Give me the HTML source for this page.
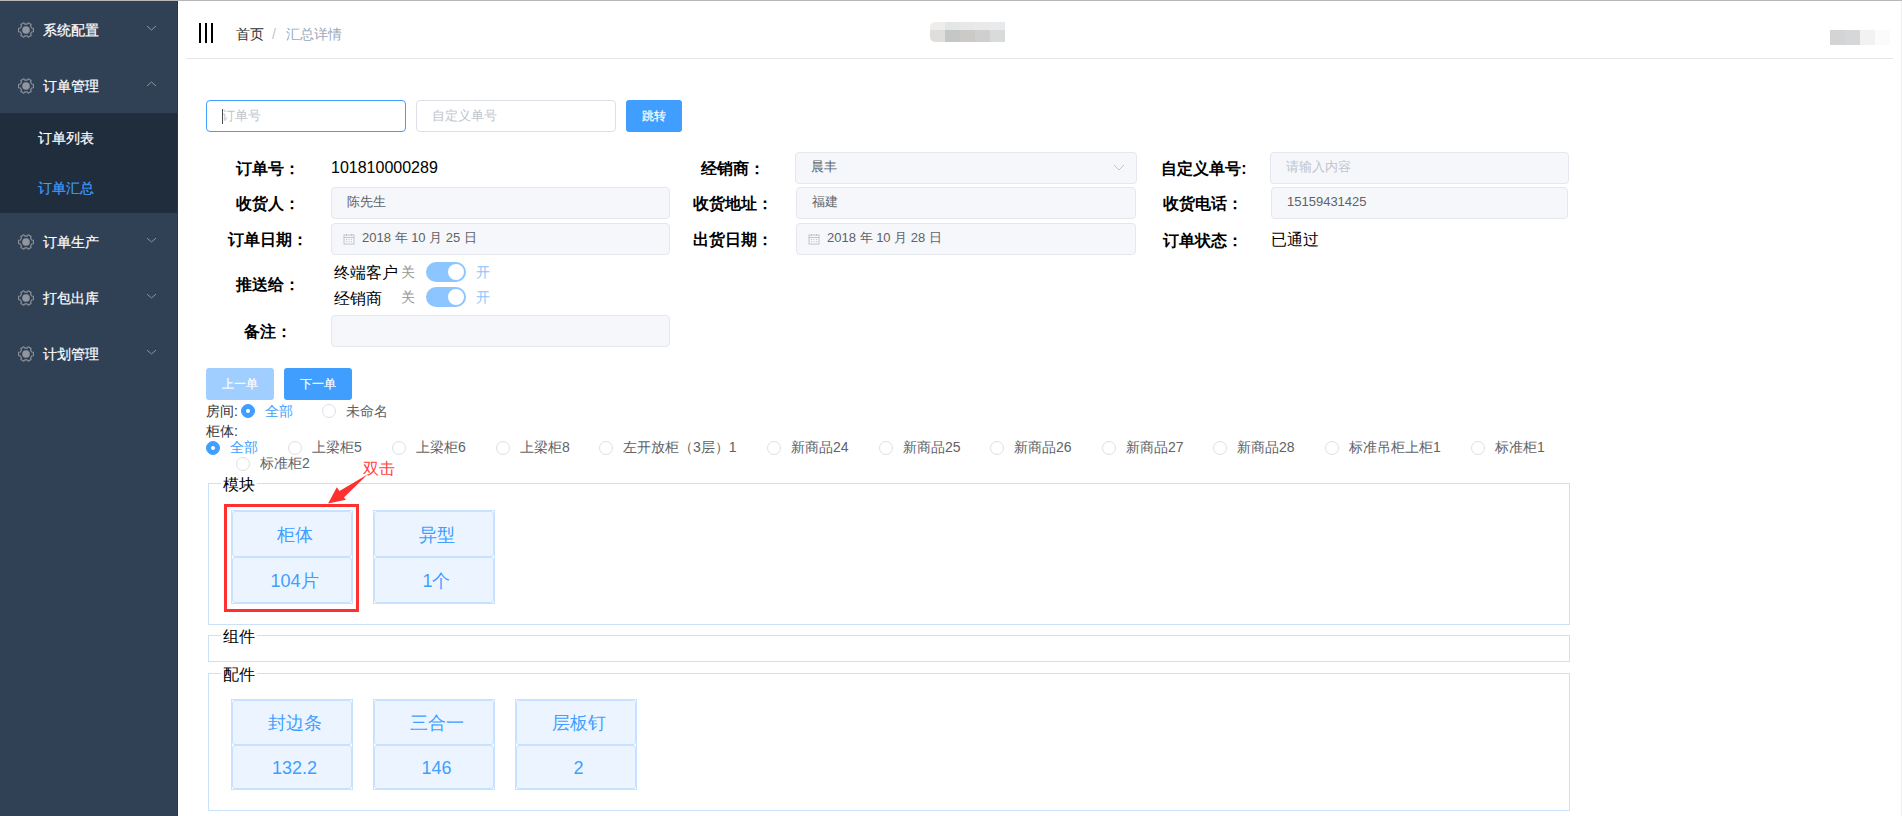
<!DOCTYPE html><html><head><meta charset="utf-8"><style>
*{box-sizing:border-box;margin:0;padding:0}
html,body{width:1902px;height:816px;overflow:hidden;background:#fff;font-family:"Liberation Sans",sans-serif;color:#303133}
div,span{position:absolute}
#topline{left:0;top:0;width:1902px;height:1px;background:#b9b6b9;z-index:5}
#side{left:0;top:0;width:178px;height:816px;background:#304156}
#side .edge{right:0;top:0;width:1px;height:816px;background:rgba(0,0,0,0.15);z-index:2}
.mi{left:0;width:177px;height:56px;color:#fff;font-size:14px;-webkit-text-stroke:0.2px #fff}
.mi .t{left:43px;top:19px;line-height:20px;white-space:nowrap}
svg{position:absolute}
#sub{left:0;top:113px;width:177px;height:100px;background:#1f2d3d}
.si{left:38px;font-size:14px;color:#fff;-webkit-text-stroke:0.2px currentColor;line-height:20px;white-space:nowrap}
.bar{top:23px;width:2px;height:20px;background:#000}
#hline{left:186px;top:58px;width:1707px;height:1px;background:#e6e6e6}
#rline{left:1901px;top:0;width:1px;height:816px;background:#efefef}
.crumb{font-size:14px;line-height:20px;top:24px;white-space:nowrap}
.inp{height:32px;border:1px solid #dcdfe6;border-radius:4px;background:#fff;font-size:13px;color:#c0c4cc;line-height:30px;padding-left:15px;white-space:nowrap}
.btn{height:32px;border-radius:3px;background:#409eff;color:#fff;font-size:12px;-webkit-text-stroke:0.2px #fff;line-height:32px;text-align:center;white-space:nowrap}
.lbl{text-align:center;font-size:16px;font-weight:bold;color:#000;line-height:22px;white-space:nowrap}
.val{font-size:16px;color:#000;line-height:22px;white-space:nowrap}
.dis{border:1px solid #e4e7ed;border-radius:4px;background:#f5f7fa;font-size:13px;color:#606266;line-height:29px;padding-left:15px;white-space:nowrap}
.ph{color:#c0c4cc}
.sw{width:40px;height:20px;border-radius:10px;background:#8cc5ff}
.sw:after{content:"";position:absolute;right:2px;top:2px;width:16px;height:16px;border-radius:50%;background:#fff}
.sl{font-size:14px;line-height:20px;white-space:nowrap}
.radio{width:14px;height:14px;border:1px solid #dcdfe6;border-radius:50%;background:#fff}
.radio.on{border-color:#409eff;background:#409eff}
.radio.on:after{content:"";position:absolute;left:4px;top:4px;width:4px;height:4px;border-radius:50%;background:#fff}
.rt{font-size:14px;color:#606266;line-height:20px;white-space:nowrap}
.rt.on{color:#409eff}
.fs{left:208px;width:1362px;border:1px solid #c9e1f9}
.lg{left:12px;top:-9px;background:#fff;padding:0 2px;font-size:16px;line-height:20px;color:#000;white-space:nowrap}
.card{width:122px;border:1px solid #c6e2ff;background:#fff}
.cell{position:relative;border:1px solid #c6e2ff;border-radius:3px;background:#ecf5ff;color:#409eff;font-size:18px;text-align:center;white-space:nowrap;padding-left:5px;padding-top:2px}
</style></head><body>
<div id="topline"></div>
<div id="side"><div class="edge"></div><div id="sub"></div>
<div class="mi" style="top:1px"><svg width="18" height="18" viewBox="-1 -1 18 18" style="left:17px;top:20px"><path d="M15.41 9.71 L15.41 6.29 L13.67 6.05 L12.53 4.06 L13.18 2.44 L10.22 0.73 L9.14 2.11 L6.86 2.11 L5.78 0.73 L2.82 2.44 L3.47 4.06 L2.33 6.05 L0.59 6.29 L0.59 9.71 L2.33 9.95 L3.47 11.94 L2.82 13.56 L5.78 15.27 L6.86 13.89 L9.14 13.89 L10.22 15.27 L13.18 13.56 L12.53 11.94 L13.67 9.95Z" fill="none" stroke="#8c939c" stroke-width="1.1" stroke-linejoin="round"/><circle cx="8" cy="8" r="3.8" fill="#91959d"/></svg><span class="t">系统配置</span><svg width="11" height="6" viewBox="0 0 11 6" style="left:146px;top:24px"><path d="M1 1L5.5 5L10 1" fill="none" stroke="#909399" stroke-width="1"/></svg></div>
<div class="mi" style="top:57px"><svg width="18" height="18" viewBox="-1 -1 18 18" style="left:17px;top:20px"><path d="M15.41 9.71 L15.41 6.29 L13.67 6.05 L12.53 4.06 L13.18 2.44 L10.22 0.73 L9.14 2.11 L6.86 2.11 L5.78 0.73 L2.82 2.44 L3.47 4.06 L2.33 6.05 L0.59 6.29 L0.59 9.71 L2.33 9.95 L3.47 11.94 L2.82 13.56 L5.78 15.27 L6.86 13.89 L9.14 13.89 L10.22 15.27 L13.18 13.56 L12.53 11.94 L13.67 9.95Z" fill="none" stroke="#8c939c" stroke-width="1.1" stroke-linejoin="round"/><circle cx="8" cy="8" r="3.8" fill="#91959d"/></svg><span class="t">订单管理</span><svg width="11" height="6" viewBox="0 0 11 6" style="left:146px;top:24px"><path d="M1 5L5.5 1L10 5" fill="none" stroke="#909399" stroke-width="1"/></svg></div>
<div class="mi" style="top:213px"><svg width="18" height="18" viewBox="-1 -1 18 18" style="left:17px;top:20px"><path d="M15.41 9.71 L15.41 6.29 L13.67 6.05 L12.53 4.06 L13.18 2.44 L10.22 0.73 L9.14 2.11 L6.86 2.11 L5.78 0.73 L2.82 2.44 L3.47 4.06 L2.33 6.05 L0.59 6.29 L0.59 9.71 L2.33 9.95 L3.47 11.94 L2.82 13.56 L5.78 15.27 L6.86 13.89 L9.14 13.89 L10.22 15.27 L13.18 13.56 L12.53 11.94 L13.67 9.95Z" fill="none" stroke="#8c939c" stroke-width="1.1" stroke-linejoin="round"/><circle cx="8" cy="8" r="3.8" fill="#91959d"/></svg><span class="t">订单生产</span><svg width="11" height="6" viewBox="0 0 11 6" style="left:146px;top:24px"><path d="M1 1L5.5 5L10 1" fill="none" stroke="#909399" stroke-width="1"/></svg></div>
<div class="mi" style="top:269px"><svg width="18" height="18" viewBox="-1 -1 18 18" style="left:17px;top:20px"><path d="M15.41 9.71 L15.41 6.29 L13.67 6.05 L12.53 4.06 L13.18 2.44 L10.22 0.73 L9.14 2.11 L6.86 2.11 L5.78 0.73 L2.82 2.44 L3.47 4.06 L2.33 6.05 L0.59 6.29 L0.59 9.71 L2.33 9.95 L3.47 11.94 L2.82 13.56 L5.78 15.27 L6.86 13.89 L9.14 13.89 L10.22 15.27 L13.18 13.56 L12.53 11.94 L13.67 9.95Z" fill="none" stroke="#8c939c" stroke-width="1.1" stroke-linejoin="round"/><circle cx="8" cy="8" r="3.8" fill="#91959d"/></svg><span class="t">打包出库</span><svg width="11" height="6" viewBox="0 0 11 6" style="left:146px;top:24px"><path d="M1 1L5.5 5L10 1" fill="none" stroke="#909399" stroke-width="1"/></svg></div>
<div class="mi" style="top:325px"><svg width="18" height="18" viewBox="-1 -1 18 18" style="left:17px;top:20px"><path d="M15.41 9.71 L15.41 6.29 L13.67 6.05 L12.53 4.06 L13.18 2.44 L10.22 0.73 L9.14 2.11 L6.86 2.11 L5.78 0.73 L2.82 2.44 L3.47 4.06 L2.33 6.05 L0.59 6.29 L0.59 9.71 L2.33 9.95 L3.47 11.94 L2.82 13.56 L5.78 15.27 L6.86 13.89 L9.14 13.89 L10.22 15.27 L13.18 13.56 L12.53 11.94 L13.67 9.95Z" fill="none" stroke="#8c939c" stroke-width="1.1" stroke-linejoin="round"/><circle cx="8" cy="8" r="3.8" fill="#91959d"/></svg><span class="t">计划管理</span><svg width="11" height="6" viewBox="0 0 11 6" style="left:146px;top:24px"><path d="M1 1L5.5 5L10 1" fill="none" stroke="#909399" stroke-width="1"/></svg></div>
<span class="si" style="top:128px">订单列表</span>
<span class="si" style="top:178px;color:#409eff">订单汇总</span>
</div>
<div class="bar" style="left:199px"></div>
<div class="bar" style="left:205px"></div>
<div class="bar" style="left:211px"></div>
<span class="crumb" style="left:236px;color:#303133">首页</span>
<span class="crumb" style="left:272px;color:#c0c4cc">/</span>
<span class="crumb" style="left:286px;color:#97a8be">汇总详情</span>
<div id="hline"></div><div id="rline"></div>
<div style="left:930px;top:22px;width:15px;height:8px;background:#efedeb;border-radius:5px 0 0 0;"></div>
<div style="left:930px;top:30px;width:15px;height:12px;background:#dfdedd;border-radius:0 0 0 5px;"></div>
<div style="left:945px;top:22px;width:15px;height:8px;background:#e3e6e7;"></div>
<div style="left:945px;top:30px;width:15px;height:12px;background:#c5c6c6;"></div>
<div style="left:960px;top:22px;width:15px;height:8px;background:#e8e8e8;"></div>
<div style="left:960px;top:30px;width:15px;height:12px;background:#cbcac6;"></div>
<div style="left:975px;top:22px;width:15px;height:8px;background:#eae9e7;"></div>
<div style="left:975px;top:30px;width:15px;height:12px;background:#cfcfcf;"></div>
<div style="left:990px;top:22px;width:15px;height:8px;background:#e9eaec;"></div>
<div style="left:990px;top:30px;width:15px;height:12px;background:#d9dbda;"></div>
<div style="left:1830px;top:30px;width:15px;height:15px;background:#d4d4d4"></div>
<div style="left:1845px;top:30px;width:15px;height:15px;background:#d6d7d9"></div>
<div style="left:1860px;top:30px;width:15px;height:15px;background:#f2f2f2"></div>
<div style="left:1875px;top:30px;width:15px;height:15px;background:#fbfbfb"></div>
<div class="inp" style="left:206px;top:100px;width:200px;border-color:#409eff"><span style="left:15px;top:8px;width:1px;height:15px;background:#4a4a4a"></span>订单号</div>
<div class="inp" style="left:416px;top:100px;width:200px">自定义单号</div>
<div class="btn" style="left:626px;top:100px;width:56px">跳转</div>
<span class="lbl" style="left:268px;top:158px;width:160px;margin-left:-80px">订单号：</span>
<span class="lbl" style="left:268px;top:193px;width:160px;margin-left:-80px">收货人：</span>
<span class="lbl" style="left:268px;top:229px;width:160px;margin-left:-80px">订单日期：</span>
<span class="lbl" style="left:268px;top:274px;width:160px;margin-left:-80px">推送给：</span>
<span class="lbl" style="left:268px;top:321px;width:160px;margin-left:-80px">备注：</span>
<span class="lbl" style="left:733px;top:158px;width:160px;margin-left:-80px">经销商：</span>
<span class="lbl" style="left:733px;top:193px;width:160px;margin-left:-80px">收货地址：</span>
<span class="lbl" style="left:733px;top:229px;width:160px;margin-left:-80px">出货日期：</span>
<span class="lbl" style="left:1204px;top:158px;width:160px;margin-left:-80px">自定义单号:</span>
<span class="lbl" style="left:1203px;top:193px;width:160px;margin-left:-80px">收货电话：</span>
<span class="lbl" style="left:1203px;top:230px;width:160px;margin-left:-80px">订单状态：</span>
<span class="val" style="left:331px;top:157px">101810000289</span>
<span class="val" style="left:1271px;top:229px">已通过</span>
<div class="dis" style="left:331px;top:187px;width:339px;height:32px;line-height:28px">陈先生</div>
<div class="dis" style="left:331px;top:223px;width:339px;height:32px;line-height:28px"><span style="left:30px;top:0">2018 年 10 月 25 日</span><svg width="12" height="12" viewBox="0 0 12 12" style="left:11px;top:9px"><rect x="1" y="2" width="10" height="9" fill="none" stroke="#c0c4cc" stroke-width="1"/><path d="M1 4.5h10M3 6.5h1M5.5 6.5h1M8 6.5h1M3 8.5h1M5.5 8.5h1M8 8.5h1M3.5 1v2M8.5 1v2" stroke="#c0c4cc" stroke-width="1"/></svg></div>
<div class="dis" style="left:331px;top:315px;width:339px;height:32px;line-height:28px"></div>
<div class="dis" style="left:795px;top:152px;width:342px;height:32px;line-height:28px">晨丰<svg width="12" height="7" viewBox="0 0 12 7" style="left:317px;top:11px"><path d="M1 1l5 5 5-5" fill="none" stroke="#c0c4cc" stroke-width="1"/></svg></div>
<div class="dis" style="left:796px;top:187px;width:340px;height:32px;line-height:28px">福建</div>
<div class="dis" style="left:796px;top:223px;width:340px;height:32px;line-height:28px"><span style="left:30px;top:0">2018 年 10 月 28 日</span><svg width="12" height="12" viewBox="0 0 12 12" style="left:11px;top:9px"><rect x="1" y="2" width="10" height="9" fill="none" stroke="#c0c4cc" stroke-width="1"/><path d="M1 4.5h10M3 6.5h1M5.5 6.5h1M8 6.5h1M3 8.5h1M5.5 8.5h1M8 8.5h1M3.5 1v2M8.5 1v2" stroke="#c0c4cc" stroke-width="1"/></svg></div>
<div class="dis" style="left:1270px;top:152px;width:299px;height:32px;line-height:28px"><span class="ph" style="left:15px;top:0">请输入内容</span></div>
<div class="dis" style="left:1271px;top:187px;width:297px;height:32px;line-height:28px">15159431425</div>
<span class="sl" style="left:334px;top:263px;color:#000;font-size:16px">终端客户</span>
<span class="sl" style="left:401px;top:262px;color:#959595">关</span>
<div class="sw" style="left:426px;top:262px"></div>
<span class="sl" style="left:476px;top:262px;color:#8cc5ff">开</span>
<span class="sl" style="left:334px;top:289px;color:#000;font-size:16px">经销商</span>
<span class="sl" style="left:401px;top:287px;color:#959595">关</span>
<div class="sw" style="left:426px;top:287px"></div>
<span class="sl" style="left:476px;top:287px;color:#8cc5ff">开</span>
<div class="btn" style="left:206px;top:368px;width:68px;background:#a0cfff">上一单</div>
<div class="btn" style="left:284px;top:368px;width:68px">下一单</div>
<span class="rt" style="left:206px;top:401px;color:#303133">房间:</span>
<div class="radio on" style="left:241px;top:404px"></div>
<span class="rt on" style="left:265px;top:401px">全部</span>
<div class="radio" style="left:322px;top:404px"></div>
<span class="rt" style="left:346px;top:401px">未命名</span>
<span class="rt" style="left:206px;top:421px;color:#303133">柜体:</span>
<div class="radio on" style="left:206px;top:441px"></div>
<span class="rt on" style="left:230px;top:437px">全部</span>
<div class="radio" style="left:288px;top:441px"></div>
<span class="rt" style="left:312px;top:437px">上梁柜5</span>
<div class="radio" style="left:392px;top:441px"></div>
<span class="rt" style="left:416px;top:437px">上梁柜6</span>
<div class="radio" style="left:496px;top:441px"></div>
<span class="rt" style="left:520px;top:437px">上梁柜8</span>
<div class="radio" style="left:599px;top:441px"></div>
<span class="rt" style="left:623px;top:437px">左开放柜（3层）1</span>
<div class="radio" style="left:767px;top:441px"></div>
<span class="rt" style="left:791px;top:437px">新商品24</span>
<div class="radio" style="left:879px;top:441px"></div>
<span class="rt" style="left:903px;top:437px">新商品25</span>
<div class="radio" style="left:990px;top:441px"></div>
<span class="rt" style="left:1014px;top:437px">新商品26</span>
<div class="radio" style="left:1102px;top:441px"></div>
<span class="rt" style="left:1126px;top:437px">新商品27</span>
<div class="radio" style="left:1213px;top:441px"></div>
<span class="rt" style="left:1237px;top:437px">新商品28</span>
<div class="radio" style="left:1325px;top:441px"></div>
<span class="rt" style="left:1349px;top:437px">标准吊柜上柜1</span>
<div class="radio" style="left:1471px;top:441px"></div>
<span class="rt" style="left:1495px;top:437px">标准柜1</span>
<div class="radio" style="left:236px;top:457px"></div>
<span class="rt" style="left:260px;top:453px">标准柜2</span>
<span style="left:363px;top:459px;font-size:16px;line-height:20px;color:#ff4040;white-space:nowrap">双击</span>
<div class="fs" style="top:483px;height:142px"><span class="lg">模块</span></div>
<div class="fs" style="top:635px;height:27px"><span class="lg">组件</span></div>
<div class="fs" style="top:673px;height:138px"><span class="lg">配件</span></div>
<div class="card" style="left:231px;top:510px;height:94px"><div class="cell" style="height:46px;line-height:42px">柜体</div><div class="cell" style="height:46px;line-height:42px">104片</div></div>
<div class="card" style="left:373px;top:510px;height:94px"><div class="cell" style="height:46px;line-height:42px">异型</div><div class="cell" style="height:46px;line-height:42px">1个</div></div>
<div class="card" style="left:231px;top:699px;height:91px"><div class="cell" style="height:45px;line-height:41px">封边条</div><div class="cell" style="height:44px;line-height:40px">132.2</div></div>
<div class="card" style="left:373px;top:699px;height:91px"><div class="cell" style="height:45px;line-height:41px">三合一</div><div class="cell" style="height:44px;line-height:40px">146</div></div>
<div class="card" style="left:515px;top:699px;height:91px"><div class="cell" style="height:45px;line-height:41px">层板钉</div><div class="cell" style="height:44px;line-height:40px">2</div></div>
<div style="left:224px;top:504px;width:135px;height:108px;border:3px solid #ff3030"></div>
<svg width="60" height="40" viewBox="0 0 60 40" style="position:absolute;left:320px;top:470px"><path d="M47.5 4.5 L19.5 21 L16.8 17.3 L8.1 33.5 L26 29.8 L23.9 27.4 Z" fill="#ff3030"/></svg>
</body></html>
